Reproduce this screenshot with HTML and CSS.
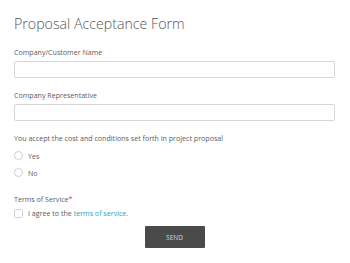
FILE: index.html
```html
<!DOCTYPE html>
<html>
<head>
<meta charset="utf-8">
<link rel="stylesheet" href="styles.css">
</head>
<body>
<form class="form">
  <h1 class="title">Proposal Acceptance Form</h1>
  <div class="field first">
    <label class="label">Company/Customer Name</label>
    <div class="input"></div>
  </div>
  <div class="field">
    <label class="label">Company Representative</label>
    <div class="input"></div>
  </div>
  <div class="field question">
    <div class="label">You accept the cost and conditions set forth in project proposal</div>
    <div class="option"><span class="radio"></span><span>Yes</span></div>
    <div class="option"><span class="radio"></span><span>No</span></div>
  </div>
  <div class="field terms">
    <div class="label">Terms of Service<span class="req">*</span></div>
    <div class="option check-row"><span class="checkbox"></span><span>I agree to the <a class="link">terms of service.</a></span></div>
  </div>
  <div class="actions"><button type="button" class="send">SEND</button></div>
</form>
</body>
</html>
```
FILE: styles.css
```css
html, body { margin: 0; padding: 0; background: #fff; }
body { font-family: "Open Sans", "Liberation Sans", sans-serif; color: #5c5c5c; }
.form { padding: 13px 15px 0 14px; display: flex; flex-direction: column; }
.title { margin: 0; font-size: 14.2px; font-weight: 300; color: #555; line-height: 22px; letter-spacing: 0; }
.field { display: flex; flex-direction: column; margin-top: 12px; }
.label { font-size: 7.1px; line-height: 10px; color: #5c5c5c; }
.field .label { margin-bottom: 4px; }
.input { height: 15px; border: 1px solid #d6d6d6; border-radius: 2px; background: #fff; }
.option { display: flex; align-items: center; gap: 5px; font-size: 7.1px; height: 17px; }
.radio { width: 7px; height: 7px; border: 1px solid #cfcfcf; border-radius: 50%; }
.terms { margin-top: 13px; }
.terms .label { margin-bottom: 3px; }
.req { color: #d33; }
.checkbox { width: 7px; height: 7px; border: 1px solid #cfcfcf; border-radius: 1.5px; }
.check-row { height: 12px; }
.link { color: #2aa3b8; text-decoration: none; }
.actions { display: flex; justify-content: center; margin-top: 7px; }
.send { width: 60px; height: 22px; background: #4a4a4a; color: #d8d8d8; border: 0; border-radius: 1px; font-family: inherit; font-size: 6.5px; padding: 0; }
```
